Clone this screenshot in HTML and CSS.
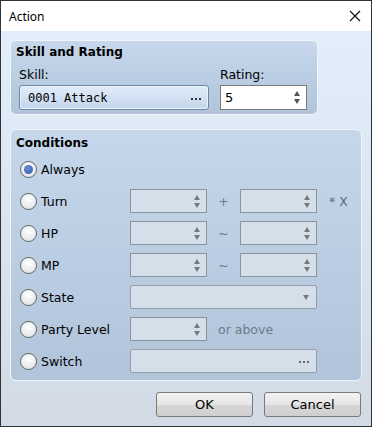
FILE: index.html
```html
<!DOCTYPE html>
<html lang="en">
<head>
    <meta charset="UTF-8">
    <title>Action</title>
    <link rel="stylesheet" href="styles.css">
</head>
<body>

    <div class="window">
        <div class="titlebar">
            <span class="title">Action</span>
            <svg class="close" width="12" height="12" viewBox="0 0 12 12">
                <path d="M1 1 L11 11 M11 1 L1 11" stroke="#111" stroke-width="1.2" fill="none"/>
            </svg>
        </div>

        <div class="client">
            <div class="group group-skill">
                <div class="group-title">Skill and Rating</div>
                <div class="skill-row">
                    <div class="field skill-field">
                        <div class="label">Skill:</div>
                        <div class="picker">
                            <span class="mono">0001 Attack</span>
                            <span class="dots"><b></b><b></b><b></b></span>
                        </div>
                    </div>
                    <div class="field rating-field">
                        <div class="label">Rating:</div>
                        <div class="spin spin-on">
                            <span>5</span>
                            <span class="arrows"><i class="up"></i><i class="down"></i></span>
                        </div>
                    </div>
                </div>
            </div>

            <div class="group group-cond">
                <div class="group-title">Conditions</div>
                <div class="cond-grid">
                    <div class="radio-cell"><span class="radio checked"></span>Always</div>
                    <div class="row-fill"></div>

                    <div class="radio-cell"><span class="radio"></span>Turn</div>
                    <div class="spin"><span class="arrows"><i class="up"></i><i class="down"></i></span></div>
                    <div class="sep">+</div>
                    <div class="spin"><span class="arrows"><i class="up"></i><i class="down"></i></span></div>
                    <div class="note">* X</div>

                    <div class="radio-cell"><span class="radio"></span>HP</div>
                    <div class="spin"><span class="arrows"><i class="up"></i><i class="down"></i></span></div>
                    <div class="sep">~</div>
                    <div class="spin"><span class="arrows"><i class="up"></i><i class="down"></i></span></div>
                    <div></div>

                    <div class="radio-cell"><span class="radio"></span>MP</div>
                    <div class="spin"><span class="arrows"><i class="up"></i><i class="down"></i></span></div>
                    <div class="sep">~</div>
                    <div class="spin"><span class="arrows"><i class="up"></i><i class="down"></i></span></div>
                    <div></div>

                    <div class="radio-cell"><span class="radio"></span>State</div>
                    <div class="select wide"><i class="down"></i></div>
                    <div></div>

                    <div class="radio-cell"><span class="radio"></span>Party Level</div>
                    <div class="spin"><span class="arrows"><i class="up"></i><i class="down"></i></span></div>
                    <div class="after">or above</div>

                    <div class="radio-cell"><span class="radio"></span>Switch</div>
                    <div class="select wide"><span class="dots"><b></b><b></b><b></b></span></div>
                    <div></div>
                </div>
            </div>

            <div class="buttons">
                <button>OK</button>
                <button>Cancel</button>
            </div>
        </div>
    </div>

</body>
</html>
```

FILE: styles.css
```css
body {
    margin: 0;
    font-family: 'DejaVu Sans', sans-serif;
    font-size: 12px;
    color: #000;
}
.window {
    width: 372px;
    height: 427px;
    box-sizing: border-box;
    border: 1px solid #333;
    display: flex;
    flex-direction: column;
}
.titlebar {
    height: 30px;
    background: #fff;
    display: flex;
    align-items: center;
    justify-content: space-between;
    padding: 0 10px 0 8px;
    flex-shrink: 0;
}
.title {
    font-family: 'Noto Sans', sans-serif;
    font-size: 12px;
}
.client {
    flex: 1;
    padding: 9px 9px 0 9px;
    background: linear-gradient(#e2eefb, #d2dbe5);
}
.group {
    border: 1px solid #eef4fa;
    border-radius: 6px;
    background: linear-gradient(#c6d7eb, #b1c4da);
}
.group-title {
    font-weight: bold;
    line-height: 16px;
}
.group-skill {
    width: 308px;
    box-sizing: border-box;
    padding: 3px 10px 4px 5px;
}
.skill-row {
    display: flex;
    gap: 11px;
    margin-top: 7px;
    padding-left: 3px;
}
.label {
    line-height: 16px;
    margin-bottom: 2px;
    font-size: 12.5px;
}
.skill-field {
    width: 190px;
}
.rating-field {
    width: 87px;
}
.picker {
    height: 25px;
    box-sizing: border-box;
    border: 1px solid #6b87ab;
    border-radius: 3px;
    background: linear-gradient(#e1ecf8, #c3d6ec);
    box-shadow: inset 0 0 0 1px #eef4fb;
    display: flex;
    align-items: center;
    justify-content: space-between;
    padding: 0 7px 0 8px;
}
.mono {
    font-family: 'DejaVu Sans Mono', monospace;
    font-size: 12px;
}
.dots {
    display: flex;
    gap: 2px;
    padding-top: 2px;
}
.dots b {
    width: 2px;
    height: 2px;
    background: #333;
}
.select .dots b {
    background: #666;
}
.spin {
    height: 24px;
    box-sizing: border-box;
    border: 1px solid #8b939c;
    background: #d5dfea;
    display: flex;
    align-items: center;
    justify-content: space-between;
    padding: 0 6px 0 4px;
}
.spin-on {
    height: 25px;
    background: #fff;
    border-color: #7a7a7a;
    font-size: 13px;
}
.arrows {
    display: flex;
    flex-direction: column;
    gap: 3px;
    margin-left: auto;
}
i.up, i.down {
    display: block;
    width: 0;
    height: 0;
    border-left: 3.5px solid transparent;
    border-right: 3.5px solid transparent;
}
i.up {
    border-bottom: 5px solid #777;
}
i.down {
    border-top: 5px solid #777;
}
.spin-on i.up {
    border-bottom-color: #555;
}
.spin-on i.down {
    border-top-color: #555;
}
.group-cond {
    margin-top: 14px;
    height: 252px;
    box-sizing: border-box;
    padding: 5px 9px 0 5px;
}
.cond-grid {
    display: grid;
    grid-template-columns: 110px 77px 33px 77px auto;
    grid-auto-rows: 32px;
    align-items: center;
    margin-top: 2px;
    padding-left: 4px;
    font-size: 12.5px;
}
.row-fill {
    grid-column: 2 / 6;
}
.radio-cell {
    display: flex;
    align-items: center;
    gap: 4px;
}
.radio {
    width: 17px;
    height: 17px;
    box-sizing: border-box;
    border-radius: 50%;
    border: 1px solid #5f6366;
    background: radial-gradient(circle at 50% 30%, #ffffff, #dcdfe3);
    display: flex;
    align-items: center;
    justify-content: center;
}
.radio.checked::after {
    content: "";
    width: 9px;
    height: 9px;
    border-radius: 50%;
    background: radial-gradient(circle at 40% 35%, #6b8fd3, #3157a3);
}
.sep {
    text-align: center;
    color: #6b7b8c;
}
.note {
    padding-left: 12px;
    color: #5f6b78;
}
.after {
    grid-column: 3 / 6;
    padding-left: 11px;
    color: #6b7b8c;
}
.select {
    height: 24px;
    box-sizing: border-box;
    border: 1px solid #969ea7;
    border-radius: 2px;
    background: #d5dfea;
    display: flex;
    align-items: center;
    justify-content: flex-end;
    padding: 0 7px;
}
.select.wide {
    grid-column: 2 / 5;
}
.buttons {
    display: flex;
    justify-content: flex-end;
    gap: 11px;
    margin-top: 11px;
    padding-right: 1px;
}
button {
    width: 97px;
    height: 25px;
    border: 1px solid #7a7a7a;
    border-radius: 3px;
    background: linear-gradient(#f2f2f2, #e6e6e6 50%, #d6d6d6 51%, #cfcfcf);
    font-family: 'DejaVu Sans', sans-serif;
    font-size: 13px;
    color: #000;
    padding: 0;
}
```
